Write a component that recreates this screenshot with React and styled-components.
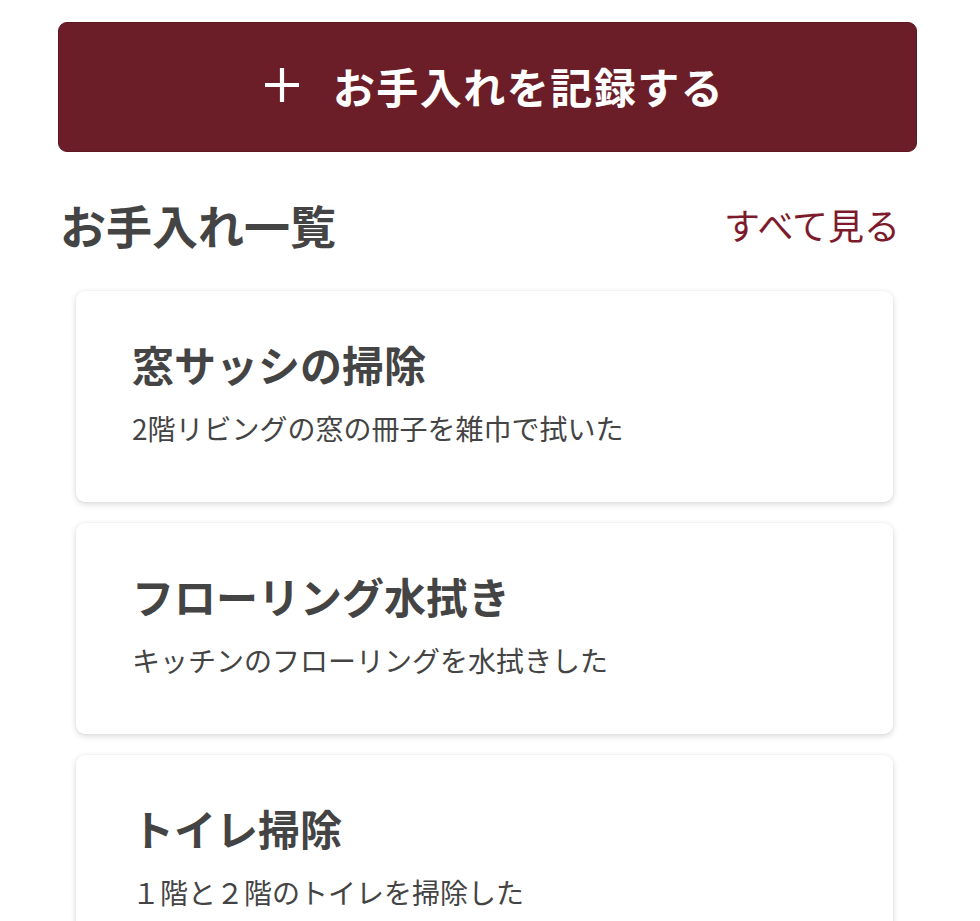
import React from 'react';
import styled, {createGlobalStyle} from 'styled-components';

const GlobalStyle = createGlobalStyle`
  html, body {
    margin: 0;
    padding: 0;
    background: #fff;
  }
  body {
    font-family: "Noto Sans CJK JP", "Noto Sans", sans-serif;
    color: #444;
  }
`;

const Page = styled.div`
  padding: 22px 63px 0 58px;
  display: flex;
  flex-direction: column;
`;

const RecordButton = styled.button`
  box-sizing: border-box;
  height: 130px;
  width: 100%;
  padding: 0 0 4px 12px;
  border: 1px solid #5e1620;
  border-radius: 9px;
  background: #6b1e28;
  color: #fff;
  font-family: inherit;
  font-size: 42px;
  font-weight: 700;
  letter-spacing: 0.035em;
  display: flex;
  align-items: center;
  justify-content: center;
  gap: 32px;
  cursor: pointer;
`;

const PlusIcon = () => (
  <svg width="38" height="38" viewBox="0 0 38 38" aria-hidden="true">
    <path d="M19 2v34M2 19h34" stroke="#fff" strokeWidth="4.2" fill="none" />
  </svg>
);

const SectionHeader = styled.div`
  margin-top: 40px;
  display: flex;
  align-items: center;
  justify-content: space-between;
  padding: 0 17px 0 2px;
`;

const SectionTitle = styled.h2`
  margin: 0;
  font-size: 46px;
  line-height: 1.4;
  font-weight: 700;
  color: #444;
`;

const SeeAll = styled.a`
  font-size: 36px;
  line-height: 1.4;
  color: #7d1a2b;
  text-decoration: none;
  cursor: pointer;
`;

const CardList = styled.div`
  margin: 35px 24px 0 18px;
  display: flex;
  flex-direction: column;
  gap: 21px;
`;

const Card = styled.div`
  box-sizing: border-box;
  height: 211px;
  padding: 46px 56px 0;
  background: #fff;
  border-radius: 9px;
  box-shadow: 0 2px 6px rgba(0, 0, 0, 0.16), 0 0 2px rgba(0, 0, 0, 0.05);
  display: flex;
  flex-direction: column;
`;

const CardTitle = styled.h3`
  margin: 0;
  font-size: 42px;
  line-height: 1.3;
  font-weight: 700;
  color: #444;
`;

const CardText = styled.p`
  margin: 17px 0 0;
  font-size: 28px;
  line-height: 1.4;
  color: #444;
`;

const records = [
  {id: 1, title: '窓サッシの掃除', text: '2階リビングの窓の冊子を雑巾で拭いた'},
  {id: 2, title: 'フローリング水拭き', text: 'キッチンのフローリングを水拭きした'},
  {id: 3, title: 'トイレ掃除', text: '１階と２階のトイレを掃除した'},
];

export default function App() {
  return (
    <>
      <GlobalStyle />
      <Page>
        <RecordButton>
          <PlusIcon />
          <span>お手入れを記録する</span>
        </RecordButton>
        <SectionHeader>
          <SectionTitle>お手入れ一覧</SectionTitle>
          <SeeAll>すべて見る</SeeAll>
        </SectionHeader>
        <CardList>
          {records.map(r => (
            <Card key={r.id}>
              <CardTitle>{r.title}</CardTitle>
              <CardText>{r.text}</CardText>
            </Card>
          ))}
        </CardList>
      </Page>
    </>
  );
}
